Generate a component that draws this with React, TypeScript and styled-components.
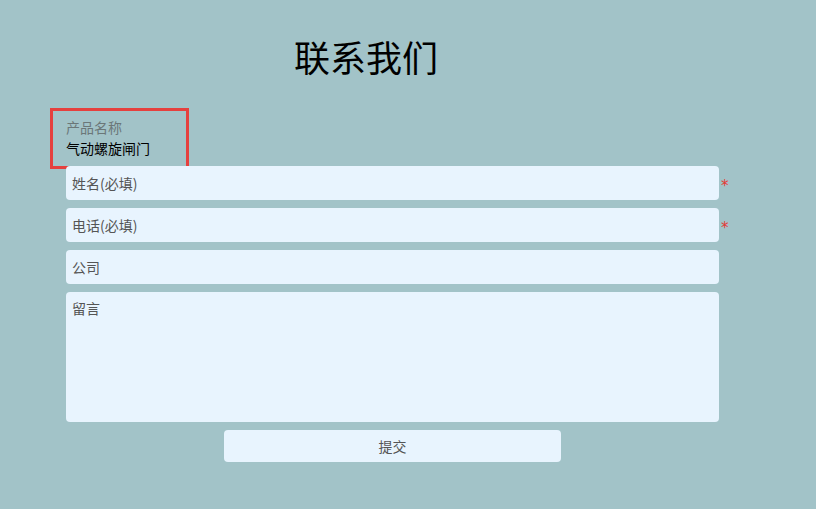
import * as React from "react"
import styled, { createGlobalStyle } from "styled-components"

const GlobalStyle = createGlobalStyle`
    html, body {
        margin: 0;
        padding: 0;
        background: #a2c3c8;
        font-family: "Noto Sans CJK SC", "Noto Sans", sans-serif;
    }
    * {
        box-sizing: border-box;
    }
`

const Page = styled.div`
    width: 816px;
    min-height: 509px;
    padding-top: 30px;
    display: flex;
    flex-direction: column;
`

const Title = styled.h1`
    width: 632px;
    margin: 0 0 0 50px;
    text-align: center;
    font-size: 36px;
    font-weight: normal;
    line-height: 52px;
    color: #000;
`

const ProductBox = styled.div`
    width: 139px;
    height: 61px;
    margin: 26px 0 0 50px;
    padding: 6px 0 0 13px;
    border: 3px solid #e5403e;
    display: flex;
    flex-direction: column;
    gap: 1px;
    font-size: 14px;
    line-height: 20px;

    .label {
        color: #6b7778;
    }

    .value {
        color: #000;
    }
`

const Form = styled.form`
    margin: -3px 0 0 66px;
    display: flex;
    flex-direction: column;
    gap: 8px;
`

const Row = styled.div`
    display: flex;
    align-items: center;
    gap: 2px;
`

const Required = styled.span<{ show: boolean }>`
    visibility: ${props => (props.show ? "visible" : "hidden")};
    color: #e53935;
    font-family: "DejaVu Sans", sans-serif;
    font-size: 15px;
    line-height: 15px;
    padding-top: 6px;
`

const Field = styled.input`
    width: 653px;
    height: 34px;
    padding: 0 6px;
    border: none;
    border-radius: 4px;
    background: #e8f4fe;
    font-family: inherit;
    font-size: 14px;
    color: #333;
    outline: none;

    &::placeholder {
        color: #555;
    }
`

const Message = styled.textarea`
    width: 653px;
    height: 130px;
    padding: 6px 6px;
    border: none;
    border-radius: 4px;
    background: #e8f4fe;
    font-family: inherit;
    font-size: 14px;
    line-height: 20px;
    color: #333;
    resize: none;
    outline: none;

    &::placeholder {
        color: #555;
    }
`

const Submit = styled.button`
    width: 337px;
    height: 32px;
    margin: 0 0 0 158px;
    border: none;
    border-radius: 4px;
    background: #e8f4fe;
    font-family: inherit;
    font-size: 14px;
    color: #555;
    cursor: pointer;
`

const fields = [
    { name: "name", placeholder: "姓名(必填)", required: true },
    { name: "phone", placeholder: "电话(必填)", required: true },
    { name: "company", placeholder: "公司", required: false }
]

const App: React.FC = () => {
    return (
        <Page>
            <GlobalStyle />
            <Title>联系我们</Title>
            <ProductBox>
                <span className={"label"}>产品名称</span>
                <span className={"value"}>气动螺旋闸门</span>
            </ProductBox>
            <Form onSubmit={e => e.preventDefault()}>
                {fields.map(f => (
                    <Row key={f.name}>
                        <Field name={f.name} placeholder={f.placeholder} />
                        <Required show={f.required}>*</Required>
                    </Row>
                ))}
                <Row>
                    <Message name={"message"} placeholder={"留言"} />
                </Row>
                <Submit type={"submit"}>提交</Submit>
            </Form>
        </Page>
    )
}

export default App
